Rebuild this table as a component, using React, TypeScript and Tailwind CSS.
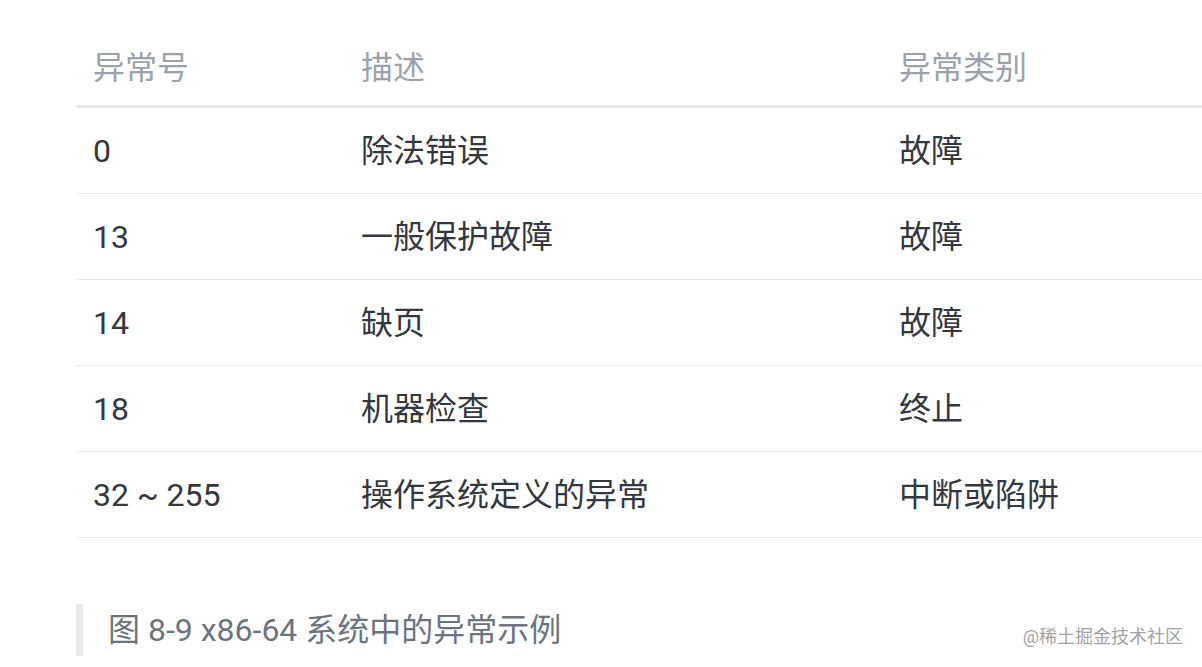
import React from "react";

const rows: [string, string, string][] = [
  ["0", "除法错误", "故障"],
  ["13", "一般保护故障", "故障"],
  ["14", "缺页", "故障"],
  ["18", "机器检查", "终止"],
  ["32 ~ 255", "操作系统定义的异常", "中断或陷阱"],
];

export default function App() {
  return (
    <div
      className="relative w-[1202px] h-[667px] overflow-hidden bg-white pl-[76px] pt-[30px]"
      style={{ fontFamily: "Roboto, 'Noto Sans CJK SC', sans-serif" }}
    >
      <div className="w-[1150px]">
        <div className="flex h-[78px] items-center border-b-[3px] border-[#e9eaec] text-[32px] text-[#9aa3ad]">
          <div className="w-[268px] pl-[17px]">异常号</div>
          <div className="w-[538px] pl-[17px]">描述</div>
          <div className="flex-1 pl-[17px]">异常类别</div>
        </div>
        {rows.map((r, i) => (
          <div
            key={i}
            className="flex h-[86px] items-center border-b border-[#e9eaec] text-[32px] text-[#333840]"
          >
            <div className="w-[268px] pl-[17px]">{r[0]}</div>
            <div className="w-[538px] pl-[17px]">{r[1]}</div>
            <div className="flex-1 pl-[17px]">{r[2]}</div>
          </div>
        ))}
      </div>
      <div className="mt-[66px] flex h-[52px] items-center border-l-[7px] border-[#e9eaec] pl-[25px] text-[32px] text-[#6b7580]">
        图 8-9 x86-64 系统中的异常示例
      </div>
      <div className="absolute right-[19px] top-[628px] text-[18px] leading-none text-[#a3a3a3]">
        @稀土掘金技术社区
      </div>
    </div>
  );
}
